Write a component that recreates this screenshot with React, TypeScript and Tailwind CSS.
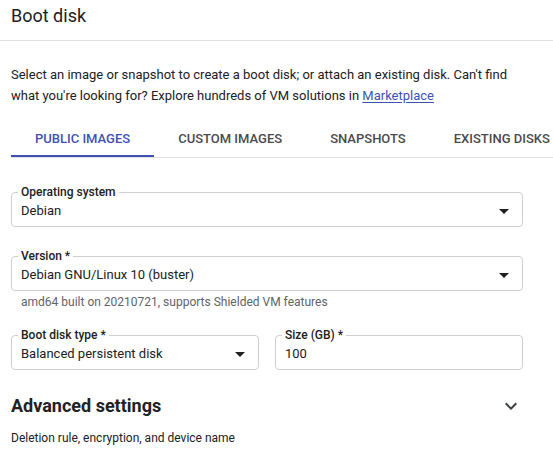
import React from 'react';

// material arrow_drop_down
const ArrowDrop = () => (
  <svg width="24" height="24" viewBox="0 0 24 24" className="shrink-0 fill-[#202124]">
    <path d="M7 10l5 5 5-5z" />
  </svg>
);

// material expand_more
const ExpandMore = () => (
  <svg width="24" height="24" viewBox="0 0 24 24" className="shrink-0 fill-[#3c4043]">
    <path d="M16.59 8.59L12 13.17 7.41 8.59 6 10l6 6 6-6z" />
  </svg>
);

interface FieldProps {
  label: string;
  value: string;
  select?: boolean;
}

const Field: React.FC<FieldProps> = ({ label, value, select = true }) => (
  <fieldset className="rounded border border-[#cfcfcf] pl-[6px] pr-[6px] pt-[1px] pb-[5px]">
    <legend className="px-[3px] text-xs leading-4 font-medium text-[#202124]">{label}</legend>
    <div className="flex h-5 items-center justify-between pl-[3px]">
      <span className="text-[13px] leading-5 text-[#202124]">{value}</span>
      {select && <ArrowDrop />}
    </div>
  </fieldset>
);

const tabs = ['PUBLIC IMAGES', 'CUSTOM IMAGES', 'SNAPSHOTS', 'EXISTING DISKS'];

export default function App() {
  const active = 0;

  return (
    <div className="w-[553px] h-[469px] overflow-hidden bg-white font-['Roboto',sans-serif] text-[#202124]">
      {/* 标题 */}
      <div className="h-[41px] border-b border-[#e0e0e0] px-[11px] pt-[4px]">
        <h1 className="text-lg leading-6">Boot disk</h1>
      </div>

      <p className="mt-[23px] px-[11px] text-[13px] leading-[21px]">
        Select an image or snapshot to create a boot disk; or attach an existing disk. Can't find
        <br />
        what you're looking for? Explore hundreds of VM solutions in{' '}
        <a href="#" className="text-[#3f51b5] underline underline-offset-2">
          Marketplace
        </a>
      </p>

      {/* 标签栏 */}
      <div className="mt-[16px] ml-[11px] flex border-b border-[#e0e0e0]">
        {tabs.map((tab, i) => (
          <div key={tab} className="flex shrink-0 flex-col">
            <div
              className={`flex h-[33px] items-center px-6 text-[13px] font-medium whitespace-nowrap ${
                i === active ? 'text-[#3f51b5]' : 'text-[#4a4a4a]'
              }`}
            >
              {tab}
            </div>
            <div className={`h-[2px] ${i === active ? 'bg-[#3f51b5]' : 'bg-transparent'}`} />
          </div>
        ))}
      </div>

      <div className="w-[512px] ml-[11px]">
        <div className="mt-[26px]">
          <Field label="Operating system" value="Debian" />
        </div>

        <div className="mt-[21px]">
          <Field label="Version *" value="Debian GNU/Linux 10 (buster)" />
        </div>
        <p className="mt-[3px] pl-[10px] text-xs leading-4 text-[#5f6368]">
          amd64 built on 20210721, supports Shielded VM features
        </p>

        <div className="mt-[17px] grid grid-cols-2 gap-4">
          <Field label="Boot disk type *" value="Balanced persistent disk" />
          <Field label="Size (GB) *" value="100" select={false} />
        </div>

        {/* 高级设置 */}
        <div className="mt-[24px] flex items-center justify-between">
          <h2 className="text-lg leading-6 font-bold">Advanced settings</h2>
          <ExpandMore />
        </div>
        <p className="mt-[12px] text-xs leading-4">Deletion rule, encryption, and device name</p>
      </div>
    </div>
  );
}
